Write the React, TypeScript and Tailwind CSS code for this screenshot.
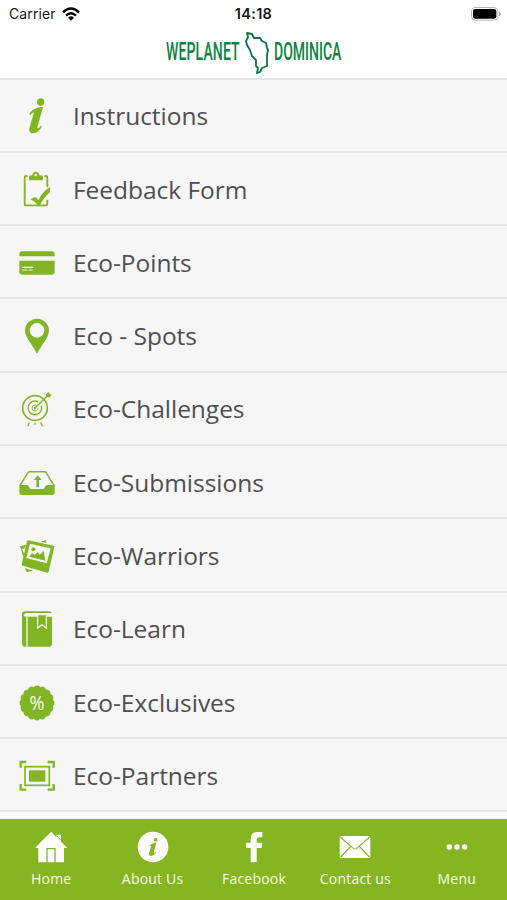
import { ReactNode } from "react";

const GREEN = "#82b524";

interface IIconProps {
  children: ReactNode;
}

function MenuIcon({ children }: IIconProps) {
  return (
    <svg viewBox="0 0 108 108" className="size-9 shrink-0 overflow-visible" fill={GREEN}>
      {children}
    </svg>
  );
}

function TabIcon({ children }: IIconProps) {
  return (
    <svg viewBox="0 0 96 96" className="ml-px size-8 shrink-0" fill="#fff">
      {children}
    </svg>
  );
}

const badgePoints = Array.from({ length: 96 }, (_, i) => {
  const angle = (i / 96) * Math.PI * 2;
  const radius = 48.5 + 4 * Math.abs(Math.cos(angle * 8));
  return `${54 + radius * Math.sin(angle)},${54 - radius * Math.cos(angle)}`;
}).join(" ");

const menuItems = [
  {
    title: "Instructions",
    icon: (
      <>
        <circle cx="65" cy="12" r="11" />
        <path d="M31 49C37 35 52 28 68 27L72 28L56 84C54 93 57 94 66 83L69 86C61 99 50 106 41 106C31 106 29 98 32 87L43 50C46 41 43 41 34 51Z" />
      </>
    ),
  },
  {
    title: "Feedback Form",
    icon: (
      <>
        <path
          d="M26 15H22Q17 15 17 20V98Q17 103 22 103H79Q85 103 85 97V86M76 15H80Q85 15 85 20V49"
          fill="none"
          stroke={GREEN}
          strokeWidth="5.500"
        />
        <path
          fillRule="evenodd"
          d="M30 28V19Q30 13 36 13H40Q41 2 50 2Q60 2 61 13H66Q72 13 72 19V28ZM50 8A4 4 0 1 0 50 16A4 4 0 1 0 50 8Z"
        />
        <path d="M34 84L50 78Q54 81 58 88Q70 62 93 48V64Q75 78 60 107Q50 92 34 84Z" />
      </>
    ),
  },
  {
    title: "Eco-Points",
    icon: (
      <>
        <path d="M1 34V28Q1 19 10 19H98Q107 19 107 28V34ZM1 47H107V80Q107 89 98 89H10Q1 89 1 80Z" />
        <path d="M9 67H43M9 75H25M29 75H41" stroke="#f6f6f6" strokeWidth="3.5" />
      </>
    ),
  },
  {
    title: "Eco - Spots",
    icon: (
      <path
        fillRule="evenodd"
        d="M54 2A36 36 0 0 1 90 38C90 58 68 78 54 108C40 78 18 58 18 38A36 36 0 0 1 54 2ZM54 15A22 22 0 1 0 54 59A22 22 0 1 0 54 15Z"
      />
    ),
  },
  {
    title: "Eco-Challenges",
    icon: (
      <>
        <g fill="none" stroke={GREEN}>
          <circle cx="48" cy="51" r="37" strokeWidth="5" />
          <path d="M58 33A20.500 20.500 0 1 0 67 44" strokeWidth="4" />
          <path d="M52 43A9 9 0 1 0 57 52" strokeWidth="3" />
          <path d="M48 51L91 9" strokeWidth="4.500" />
          <path d="M31 95L26 106M65 95L71 106M48 96V101" strokeWidth="4" />
        </g>
        <circle cx="48" cy="51" r="4" />
        <path d="M81 9L91 3L91 10L98 10L92 19L82 18Z" />
      </>
    ),
  },
  {
    title: "Eco-Submissions",
    icon: (
      <>
        <path d="M3 61L27 23Q29 20 32 20H76Q79 20 81 23L105 61" fill="none" stroke={GREEN} strokeWidth="4.500" />
        <path d="M1 60H23Q28 60 30 65L34 72H74L78 65Q80 60 85 60H107V83Q107 90 100 90H8Q1 90 1 83Z" />
        <path d="M56 31L68 45H60V67H52V45H44Z" />
      </>
    ),
  },
  {
    title: "Eco-Warriors",
    icon: (
      <>
        <path d="M3 25L21 20L18 30L9 34L16 47L13 57ZM64 11L80 6L83 14ZM18 91L43 98L23 103Z" />
        <path
          fillRule="evenodd"
          d="M28 7Q25 7 24 10L8 79Q8 82 11 83L85 104Q88 104 89 101L106 26Q106 24 103 23ZM33 17L95 31L83 76L22 60Z"
        />
        <circle cx="43" cy="34" r="6" />
        <path d="M31 56L40 44L47 51L56 41L62 50L74 38L79 68Z" />
      </>
    ),
  },
  {
    title: "Eco-Learn",
    icon: (
      <>
        <rect x="9" y="1" width="90" height="106" rx="9" />
        <path d="M23 6H99V17H21Q14 17 15 11Q16 6 23 6Z" fill="#f6f6f6" />
        <path d="M24 17V107" stroke="#f6f6f6" strokeWidth="4" />
        <path d="M56 13V51L69 41L82 51V13" fill={GREEN} stroke="#f6f6f6" strokeWidth="3.500" />
      </>
    ),
  },
  {
    title: "Eco-Exclusives",
    icon: (
      <>
        <polygon points={badgePoints} />
        <text
          x="54"
          y="76"
          textAnchor="middle"
          fill="#f6f6f6"
          className="font-['Open_Sans'] text-[59px]"
          textLength="45"
          lengthAdjust="spacingAndGlyphs"
        >
          %
        </text>
      </>
    ),
  },
  {
    title: "Eco-Partners",
    icon: (
      <>
        <g fill="none" stroke={GREEN}>
          <path d="M5 29V12H22M86 12H104V29M104 78V95H86M22 95H5V78" strokeWidth="7" />
          <rect x="18" y="26" width="73" height="56" strokeWidth="5" />
        </g>
        <rect x="30" y="37" width="49" height="34" />
      </>
    ),
  },
];

const tabs = [
  {
    label: "Home",
    icon: (
      <>
        <path
          fillRule="evenodd"
          d="M2 49L48 2L64 18V11H78V32L95 49V51H87V94H10V51H2ZM34 94V51H62V94H58V55H38V94Z"
        />
        <path d="M65 14L77 27" stroke="#86b522" strokeWidth="3" />
      </>
    ),
  },
  {
    label: "About Us",
    icon: (
      <>
        <circle cx="48" cy="48" r="46" />
        <g fill="#86b522">
          <circle cx="56" cy="26" r="5.500" />
          <path d="M37 44Q45 36 58 34L50 65Q51 69 56 62L58 64Q50 75 42 75Q34 74 36 66L42 47Q43 42 38 46Z" />
        </g>
      </>
    ),
  },
  {
    label: "Facebook",
    icon: (
      <path d="M38 94V51H24V35H38V25Q38 3 59 3H73V19H64Q56 19 56 27V35H73L71 51H56V94Z" />
    ),
  },
  {
    label: "Contact us",
    icon: (
      <>
        <rect x="2" y="15" width="92" height="66" rx="5" />
        <path
          d="M4 18L43 52Q48 56 53 52L92 18M5 78L35 46M91 78L61 46"
          fill="none"
          stroke="#86b522"
          strokeWidth="3.500"
        />
      </>
    ),
  },
  {
    label: "Menu",
    icon: (
      <>
        <circle cx="25" cy="48" r="8" />
        <circle cx="48" cy="48" r="8" />
        <circle cx="71" cy="48" r="8" />
      </>
    ),
  },
];

function StatusBar() {
  return (
    <div className="grid h-7 grid-cols-3 items-center px-[9px] font-[Inter,sans-serif] text-[14px] leading-none text-[#161616]">
      <div className="flex items-center gap-[6px]">
        <span className="tracking-[0.1px]">Carrier</span>
        <svg viewBox="0 0 54 42" className="h-[14px] w-[18px]" fill="none" stroke="#000" strokeWidth="7">
          <path d="M3 16Q27 -7 51 16M12 26Q27 12 42 26" />
          <path d="M18 32Q27 24 36 32L27 41Z" fill="#000" stroke="none" />
        </svg>
      </div>
      <span className="text-center text-[14.500px] font-semibold tracking-[0.300px]">14:18</span>
      <svg viewBox="0 0 90 42" className="mr-[-3px] h-[14px] w-[30px] justify-self-end">
        <rect x="1.500" y="1.500" width="79" height="38" rx="11" fill="#fff" stroke="#b5b5b5" strokeWidth="3" />
        <rect x="6" y="6" width="70" height="29" rx="7" fill="#000" />
        <path d="M84 14Q90 16 90 21T84 28Z" fill="#aaa" />
      </svg>
    </div>
  );
}

function Logo() {
  return (
    <div className="flex h-[46px] items-center justify-center pl-[1px] font-[Roboto,sans-serif] text-[14px] leading-none font-medium text-[#0b8540]">
      <span className="w-[74px] scale-y-[1.85] tracking-[0.140px]">WEPLANET</span>
      <svg viewBox="80 0 26 46" className="mr-[3px] ml-[5px] h-[46px] w-[26px]">
        <path
          d="M82 5L87 6L89 10L95 10L97 13L101 15L102 20L103 22L102 27V38L97 40L95 44L92 45L93 40L91 38V32L87 28L85 22L82 17L81 13L83 9Z"
          fill="none"
          stroke="#08743a"
          strokeWidth="1.800"
          strokeLinejoin="round"
        />
      </svg>
      <span className="w-[68px] scale-y-[1.85]">DOMINICA</span>
    </div>
  );
}

export default function App() {
  return (
    <div className="flex h-[900px] w-[507px] flex-col overflow-hidden bg-[#f6f6f6] font-['Open_Sans',sans-serif]">
      <header className="h-[79.500px] shrink-0 border-b-2 border-[#e5e5e5] bg-white">
        <StatusBar />
        <Logo />
      </header>

      <ul className="shrink-0">
        {menuItems.map(({ title, icon }) => (
          <li
            key={title}
            className="flex h-[73.300px] items-center gap-[18px] border-b-2 border-[#e5e5e5] pt-[2px] pl-[19px]"
          >
            <MenuIcon>{icon}</MenuIcon>
            <span className="pt-[1px] text-[24.500px] tracking-[-0.030px] text-[#4f4f4f]">{title}</span>
          </li>
        ))}
      </ul>

      <div className="flex-1 bg-[#fafafa]" />

      <nav className="grid h-[81px] shrink-0 grid-cols-5 bg-[#86b522]">
        {tabs.map(({ label, icon }) => (
          <div key={label} className="flex flex-col items-center pt-3 text-[14px] text-[#f4fae6]">
            <TabIcon>{icon}</TabIcon>
            <span className="mt-[6px] ml-px leading-5 tracking-[0.200px]">{label}</span>
          </div>
        ))}
      </nav>
    </div>
  );
}
